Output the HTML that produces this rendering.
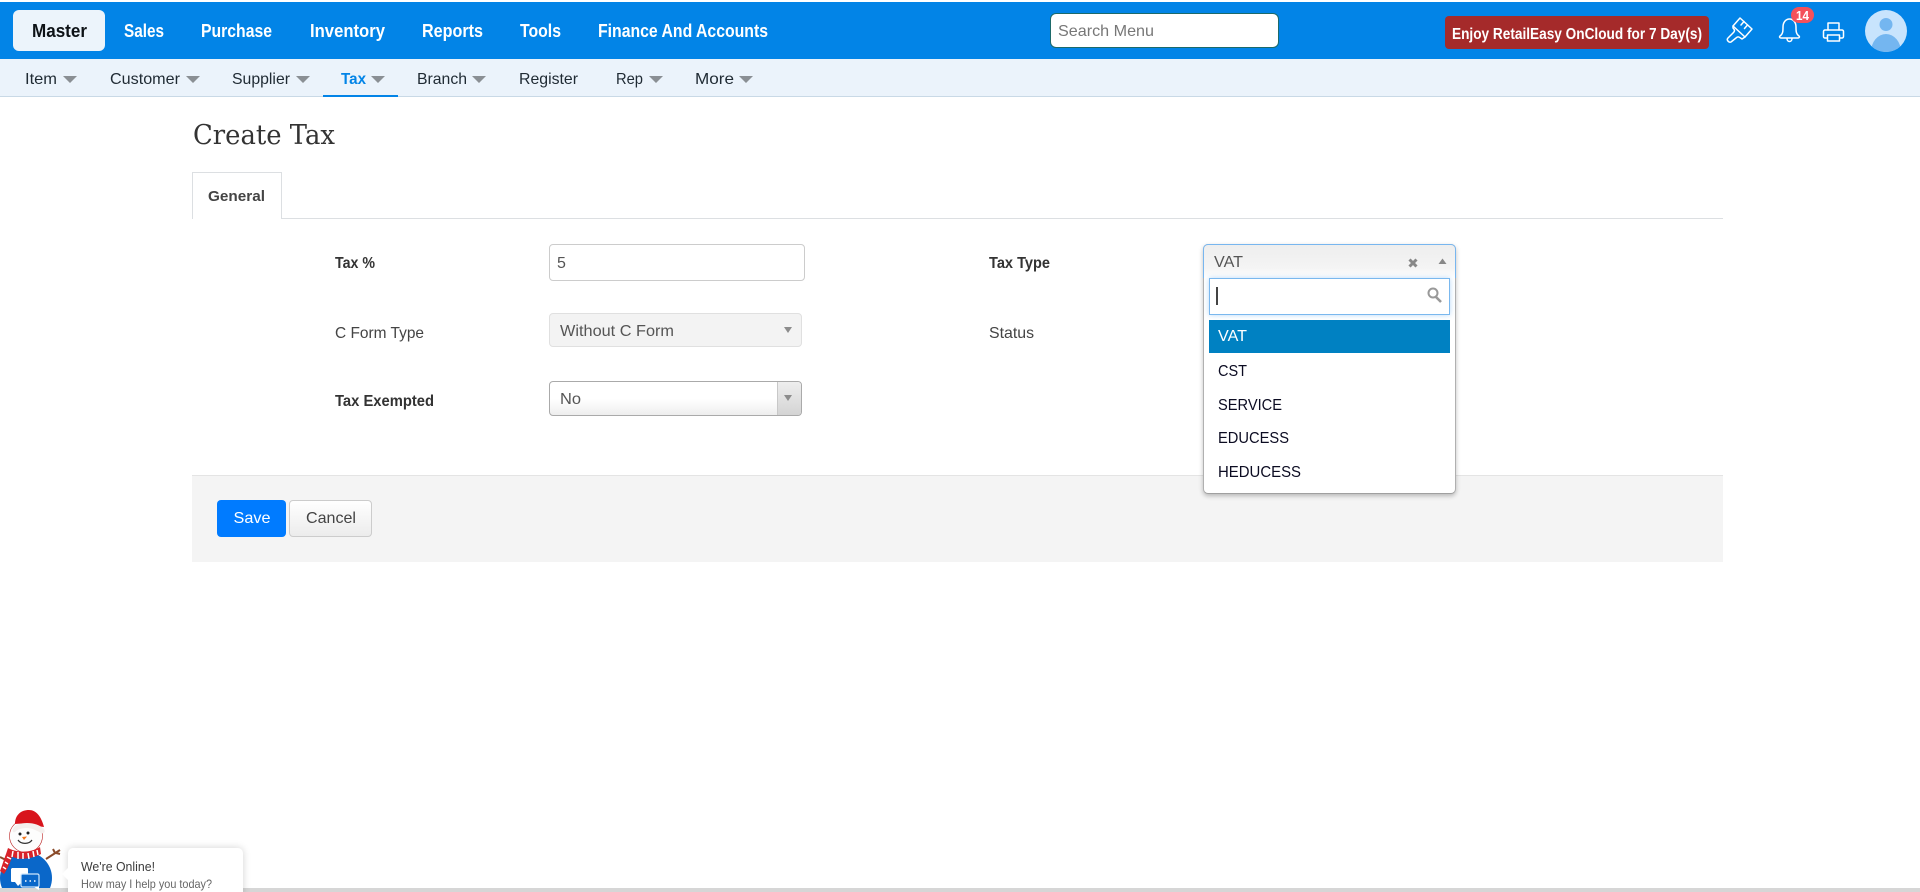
<!DOCTYPE html>
<html lang="en"><head><meta charset="utf-8"><title>Create Tax</title>
<style>
html,body{margin:0;padding:0;background:#fff;width:1920px;height:892px;overflow:hidden}
body{position:relative;font-family:"Liberation Sans",sans-serif}
.b{position:absolute;box-sizing:border-box}
svg.t{position:absolute;left:0;top:0}
svg text{font-family:"Liberation Sans",sans-serif}
</style></head><body>
<div class="b" style="left:0;top:2px;width:1920px;height:57px;background:#0284e7"></div>
<div class="b" style="left:13px;top:10px;width:92px;height:41px;background:#ecf4fb;border-radius:6px"></div>
<div class="b" style="left:0;top:59px;width:1920px;height:38px;background:#ebf3fb;border-bottom:1px solid #c9d9e6"></div>
<div class="b" style="left:323px;top:95px;width:75px;height:2px;background:#0284e7"></div>
<div class="b" style="left:1050px;top:13px;width:229px;height:35px;background:#fff;border:1px solid #1d6a6a;border-radius:6px"></div>
<div class="b" style="left:1445px;top:16px;width:264px;height:33px;background:#a52a2a;border-radius:4px"></div>
<div class="b" style="left:192px;top:218px;width:1531px;height:1px;background:#dcdfe2"></div>
<div class="b" style="left:192px;top:172px;width:90px;height:47px;background:#fff;border:1px solid #dcdfe2;border-bottom:0"></div>
<div class="b" style="left:549px;top:244px;width:256px;height:37px;background:#fff;border:1px solid #ccc;border-radius:4px"></div>
<div class="b" style="left:549px;top:313px;width:253px;height:34px;background:#f3f3f3;border:1px solid #e0e0e0;border-radius:4px"></div>
<div class="b" style="left:549px;top:381px;width:253px;height:35px;background:linear-gradient(#fff 50%,#eee);border:1px solid #aaa;border-radius:4px"></div>
<div class="b" style="left:777px;top:382px;width:24px;height:33px;background:linear-gradient(#eee,#d4d4d4);border-left:1px solid #c8c8c8;border-radius:0 3px 3px 0"></div>
<div class="b" style="left:192px;top:475px;width:1531px;height:87px;background:#f4f4f4;border-top:1px solid #e4e4e4"></div>
<div class="b" style="left:217px;top:500px;width:69px;height:37px;background:#007bff;border-radius:4px"></div>
<div class="b" style="left:289px;top:500px;width:83px;height:37px;background:linear-gradient(#fff,#ececec);border:1px solid #ccc;border-radius:4px"></div>
<div class="b" style="left:1203px;top:244px;width:253px;height:250px;background:#fff;border:1px solid #b0b0b0;border-bottom-color:#a0a0a0;border-radius:5px;box-shadow:0 2px 5px rgba(0,0,0,.25)"></div>
<div class="b" style="left:1203px;top:244px;width:253px;height:34px;background:linear-gradient(#eee,#f4f4f4 70%,#fff);border:1px solid #78b6ef;border-bottom:0;border-radius:5px 5px 0 0"></div>
<div class="b" style="left:1209px;top:278px;width:241px;height:37px;background:#fff;border:1px solid #7ab8ee;box-shadow:0 0 5px rgba(100,170,240,.45)"></div>
<div class="b" style="left:1209px;top:320px;width:241px;height:33px;background:#0081c2"></div>
<div class="b" style="left:0;top:888px;width:1920px;height:4px;background:#d6d6d6"></div>
<div class="b" style="left:68px;top:848px;width:175px;height:50px;background:#fff;border-radius:5px;box-shadow:0 0 8px rgba(0,0,0,.18)"></div>
<svg class="t" width="1920" height="892" viewBox="0 0 1920 892" xmlns="http://www.w3.org/2000/svg">
<g font-size="18" font-weight="700" fill="#fff">
<text x="32" y="37" fill="#0d1216" textLength="55" lengthAdjust="spacingAndGlyphs">Master</text>
<text x="124" y="37" textLength="40" lengthAdjust="spacingAndGlyphs">Sales</text>
<text x="201" y="37" textLength="71" lengthAdjust="spacingAndGlyphs">Purchase</text>
<text x="310" y="37" textLength="75" lengthAdjust="spacingAndGlyphs">Inventory</text>
<text x="422" y="37" textLength="61" lengthAdjust="spacingAndGlyphs">Reports</text>
<text x="520" y="37" textLength="41" lengthAdjust="spacingAndGlyphs">Tools</text>
<text x="598" y="37" textLength="170" lengthAdjust="spacingAndGlyphs">Finance And Accounts</text>
</g>
<g font-size="16" fill="#1f2a33">
<text x="25" y="84" textLength="32" lengthAdjust="spacingAndGlyphs">Item</text>
<text x="110" y="84" textLength="70" lengthAdjust="spacingAndGlyphs">Customer</text>
<text x="232" y="84" textLength="58" lengthAdjust="spacingAndGlyphs">Supplier</text>
<text x="341" y="84" fill="#0284e7" font-weight="700" textLength="25" lengthAdjust="spacingAndGlyphs">Tax</text>
<text x="417" y="84" textLength="50" lengthAdjust="spacingAndGlyphs">Branch</text>
<text x="519" y="84" textLength="59" lengthAdjust="spacingAndGlyphs">Register</text>
<text x="616" y="84" textLength="27" lengthAdjust="spacingAndGlyphs">Rep</text>
<text x="695" y="84" textLength="39" lengthAdjust="spacingAndGlyphs">More</text>
</g>
<path fill="#8a8f94" d="M63 76h14l-7 7zM186 76h14l-7 7zM296 76h14l-7 7zM371 76h14l-7 7zM472 76h14l-7 7zM649 76h14l-7 7zM739 76h14l-7 7z"/>
<text x="1058" y="36" font-size="16" fill="#777" textLength="96" lengthAdjust="spacingAndGlyphs">Search Menu</text>
<text x="1452" y="39" font-size="15.500" font-weight="700" fill="#fff" textLength="250" lengthAdjust="spacingAndGlyphs">Enjoy RetailEasy OnCloud for 7 Day(s)</text>
<g fill="none" stroke="#fff" stroke-width="1.500" stroke-linejoin="round" stroke-linecap="round">
<!-- brush -->
<path d="M1740 18L1752 29L1745 37L1733 26z"/>
<path d="M1744 21.500l-3 3.500M1747.500 25l-3 3.500"/>
<path d="M1733 26L1733 28C1735 30 1735 31 1733 33L1728 38C1726 40 1729 43 1731 42L1736 38C1738 36 1739 37 1742 39L1745 37"/>
<!-- bell -->
<path d="M1780 36c3-2 3-5 3-9 0-5 3-8 6.500-8s6.500 3 6.500 8c0 4 0 7 3 9 1 1 0 2-1 2h-17c-1 0-2-1-1-2z"/>
<path d="M1787 38.500c0 4 5 4 5 0"/>
<!-- printer -->
<path d="M1828 30v-7h11v7"/>
<path d="M1827 38h-2a1.500 1.500 0 0 1-1.500-1.500v-5a1.500 1.500 0 0 1 1.500-1.500h17a1.500 1.500 0 0 1 1.500 1.500v5a1.500 1.500 0 0 1-1.500 1.500h-2"/>
<path d="M1827.500 35h12v6h-12z"/>
</g>
<rect x="1791" y="7" width="23" height="16" rx="8" fill="#f4505a"/>
<text x="1796" y="20" font-size="12.500" font-weight="700" fill="#fff" textLength="13" lengthAdjust="spacingAndGlyphs">14</text>
<defs><clipPath id="av"><circle cx="1886" cy="31" r="21"/></clipPath><clipPath id="ch"><rect x="0" y="800" width="60" height="88"/></clipPath></defs>
<circle cx="1886" cy="31" r="21" fill="#c8e4fd"/>
<g clip-path="url(#av)" fill="#74b6f0"><circle cx="1886" cy="24.500" r="6.500"/><ellipse cx="1886" cy="52" rx="15" ry="18"/></g>
<text x="193" y="144" font-size="27" fill="#333" style="font-family:'DejaVu Serif','Liberation Serif',serif" textLength="142" lengthAdjust="spacingAndGlyphs">Create Tax</text>
<text x="208" y="201" font-size="15" font-weight="700" fill="#444" textLength="57" lengthAdjust="spacingAndGlyphs">General</text>
<g font-size="16" fill="#333">
<text x="335" y="268" font-weight="700" textLength="40" lengthAdjust="spacingAndGlyphs">Tax %</text>
<text x="335" y="338" fill="#444" textLength="89" lengthAdjust="spacingAndGlyphs">C Form Type</text>
<text x="335" y="406" font-weight="700" textLength="99" lengthAdjust="spacingAndGlyphs">Tax Exempted</text>
<text x="989" y="268" font-weight="700" textLength="61" lengthAdjust="spacingAndGlyphs">Tax Type</text>
<text x="989" y="338" fill="#444" textLength="45" lengthAdjust="spacingAndGlyphs">Status</text>
<text x="557" y="268" fill="#555">5</text>
<text x="560" y="336" fill="#555" textLength="114" lengthAdjust="spacingAndGlyphs">Without C Form</text>
<text x="560" y="404" fill="#555" textLength="21" lengthAdjust="spacingAndGlyphs">No</text>
<text x="1214" y="267" fill="#555" textLength="29" lengthAdjust="spacingAndGlyphs">VAT</text>
<text x="1218" y="341" fill="#fff" textLength="29" lengthAdjust="spacingAndGlyphs">VAT</text>
<text x="1218" y="376" fill="#0c0c22" textLength="29" lengthAdjust="spacingAndGlyphs">CST</text>
<text x="1218" y="410" fill="#0c0c22" textLength="64" lengthAdjust="spacingAndGlyphs">SERVICE</text>
<text x="1218" y="443" fill="#0c0c22" textLength="71" lengthAdjust="spacingAndGlyphs">EDUCESS</text>
<text x="1218" y="477" fill="#0c0c22" textLength="83" lengthAdjust="spacingAndGlyphs">HEDUCESS</text>
<text x="233.500" y="523" fill="#fff" textLength="37" lengthAdjust="spacingAndGlyphs">Save</text>
<text x="306" y="523" fill="#444" textLength="50" lengthAdjust="spacingAndGlyphs">Cancel</text>
</g>
<path d="M784 327h8l-4 6zM784 395h8l-4 6z" fill="#8c8c8c"/>
<path d="M1438.500 264l4-5.500 4 5.500z" fill="#888"/>
<path d="M1409.500 259.500l7 7M1416.500 259.500l-7 7" stroke="#888" stroke-width="3"/>
<rect x="1216" y="287" width="2" height="18" fill="#444"/>
<g fill="none" stroke="#999" stroke-width="2"><circle cx="1433" cy="293" r="4.500"/><path d="M1436 297l5 5" stroke-width="2.600"/></g>
<!-- snowman -->
<path d="M46 859l14-9M55 853l-2-4M56 853l4 1M0 857l6 3" stroke="#8a4b2a" stroke-width="2" fill="none"/>
<circle cx="26" cy="836" r="16.500" fill="#fdfdfd" stroke="#b22" stroke-width=".6"/>
<path d="M15 824c0-9 6-14 14-14 7 0 12 6 15 17l-8-1c-4-2-14-3-21-2z" fill="#d8141c"/>
<path d="M13 829c1-4 7-6 14-6 7 0 13 2 17 6 2 3 0 5-3 4-5-3-10-5-14-5-5 0-9 1-12 4-2 1-3-1-2-3z" fill="#f4f0ee"/>
<circle cx="20" cy="834" r="1.500" fill="#222"/><circle cx="28" cy="833" r="1.500" fill="#222"/>
<path d="M22 837l5-.5-3 3.500z" fill="#f2761c"/>
<path d="M18 840c3 4.500 11 4.500 14 0" stroke="#333" fill="none" stroke-width="1.200"/>
<g clip-path="url(#ch)"><circle cx="26" cy="878" r="26" fill="#0a67c9"/></g>
<path d="M8 848c10 5 22 5 32-1l1 7c-9 5-22 6-28 3l-1 0c-2 6-5 13-8 17l-4-3c2-5 4-12 6-17z" fill="#d8232a"/>
<path d="M13 851l-1 6M18 852v7M23 853v6M28 853l1 6M33 851l1 6M37 850l1 5M7 857l4 2M5 862l3 2M3 867l3 2" stroke="#fff" stroke-width="1.500"/>
<path d="M12 868h15a1 1 0 0 1 1 1v5h-7v9l-3 3-3-4h-3a1 1 0 0 1-1-1v-12z" fill="#fff"/>
<rect x="21" y="874" width="18" height="13" rx="1.500" fill="#0a67c9" stroke="#cfe6fb" stroke-width="1.200"/>
<path d="M34 887l5 3v-3z" fill="#fff"/>
<path d="M25 881h1.500M29.500 881h1.500M34 881h1.500" stroke="#fff" stroke-width="1.500"/>
<path d="M68 868l-6 6 6 6z" fill="#fff"/>
<text x="81" y="871" font-size="12.500" fill="#3c3c3c" textLength="74" lengthAdjust="spacingAndGlyphs">We're Online!</text>
<text x="81" y="888" font-size="12" fill="#666" textLength="131" lengthAdjust="spacingAndGlyphs">How may I help you today?</text>
</svg>
</body></html>
